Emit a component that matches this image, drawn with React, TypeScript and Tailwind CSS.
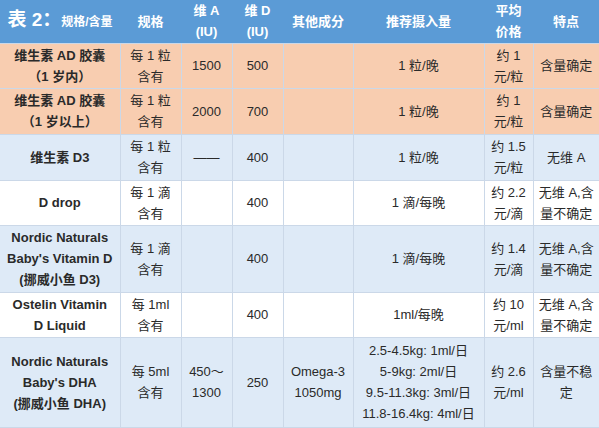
import React from "react";

type Row = {
  name: string[];
  spec: string[];
  va: string[];
  vd: string;
  other: string[];
  dose: string[];
  price: string[];
  note: string[];
  bg: string;
  h: string;
};

const rows: Row[] = [
  {
    name: ["维生素 AD 胶囊", "（1 岁内）"],
    spec: ["每 1 粒", "含有"],
    va: ["1500"],
    vd: "500",
    other: [],
    dose: ["1 粒/晚"],
    price: ["约 1", "元/粒"],
    note: ["含量确定"],
    bg: "bg-[#f8cdb0]",
    h: "h-[45px]",
  },
  {
    name: ["维生素 AD 胶囊", "（1 岁以上）"],
    spec: ["每 1 粒", "含有"],
    va: ["2000"],
    vd: "700",
    other: [],
    dose: ["1 粒/晚"],
    price: ["约 1", "元/粒"],
    note: ["含量确定"],
    bg: "bg-[#f8cdb0]",
    h: "h-[46px]",
  },
  {
    name: ["维生素 D3"],
    spec: ["每 1 粒", "含有"],
    va: ["——"],
    vd: "400",
    other: [],
    dose: ["1 粒/晚"],
    price: ["约 1.5", "元/粒"],
    note: ["无维 A"],
    bg: "bg-[#deeaf7]",
    h: "h-[46px]",
  },
  {
    name: ["D drop"],
    spec: ["每 1 滴", "含有"],
    va: [],
    vd: "400",
    other: [],
    dose: ["1 滴/每晚"],
    price: ["约 2.2", "元/滴"],
    note: ["无维 A,含", "量不确定"],
    bg: "bg-white",
    h: "h-[45px]",
  },
  {
    name: ["Nordic Naturals", "Baby's Vitamin D", "(挪威小鱼 D3)"],
    spec: ["每 1 滴", "含有"],
    va: [],
    vd: "400",
    other: [],
    dose: ["1 滴/每晚"],
    price: ["约 1.4", "元/滴"],
    note: ["无维 A,含", "量不确定"],
    bg: "bg-[#deeaf7]",
    h: "h-[67px]",
  },
  {
    name: ["Ostelin Vitamin", "D Liquid"],
    spec: ["每 1ml", "含有"],
    va: [],
    vd: "400",
    other: [],
    dose: ["1ml/每晚"],
    price: ["约 10", "元/ml"],
    note: ["无维 A,含", "量不确定"],
    bg: "bg-white",
    h: "h-[45px]",
  },
  {
    name: ["Nordic Naturals", "Baby's DHA", "(挪威小鱼 DHA)"],
    spec: ["每 5ml", "含有"],
    va: ["450～", "1300"],
    vd: "250",
    other: ["Omega-3", "1050mg"],
    dose: [
      "2.5-4.5kg: 1ml/日",
      "5-9kg: 2ml/日",
      "9.5-11.3kg: 3ml/日",
      "11.8-16.4kg: 4ml/日",
    ],
    price: ["约 2.6", "元/ml"],
    note: ["含量不稳", "定"],
    bg: "bg-[#deeaf7]",
    h: "h-[90px]",
  },
];

function Lines({ items }: { items: string[] }) {
  return (
    <>
      {items.map((t, i) => (
        <div key={i} className="whitespace-nowrap">
          {t}
        </div>
      ))}
    </>
  );
}

const td = "border border-[#cbd8e8] p-0 text-center align-middle";

export default function App() {
  return (
    <div
      className="w-[599px] h-[428px] overflow-hidden bg-white text-[13px] leading-[21px] text-[#2a2a2a]"
      style={{ fontFamily: '"Liberation Sans", "Noto Sans CJK SC", sans-serif' }}
    >
      <table className="w-[599px] table-fixed border-collapse">
        <colgroup>
          <col className="w-[120px]" />
          <col className="w-[61px]" />
          <col className="w-[51px]" />
          <col className="w-[51px]" />
          <col className="w-[70px]" />
          <col className="w-[131px]" />
          <col className="w-[49px]" />
          <col className="w-[66px]" />
        </colgroup>
        <thead>
          <tr className="h-[43px] bg-[#5b9bd6] font-bold text-white">
            <th className="p-0 text-center align-middle whitespace-nowrap">
              <span className="text-[19px]">表 2：</span>
              <span className="text-[12px]">规格/含量</span>
            </th>
            <th className="p-0 text-center align-middle">规格</th>
            <th className="p-0 text-center align-middle">
              <div>维 A</div>
              <div>(IU)</div>
            </th>
            <th className="p-0 text-center align-middle">
              <div>维 D</div>
              <div>(IU)</div>
            </th>
            <th className="p-0 text-center align-middle">其他成分</th>
            <th className="p-0 text-center align-middle">推荐摄入量</th>
            <th className="p-0 text-center align-middle">
              <div>平均</div>
              <div>价格</div>
            </th>
            <th className="p-0 text-center align-middle">特点</th>
          </tr>
        </thead>
        <tbody>
          {rows.map((r, i) => (
            <tr key={i} className={`${r.bg} ${r.h}`}>
              <td className={`${td} font-bold border-l-0`}>
                <Lines items={r.name} />
              </td>
              <td className={td}>
                <Lines items={r.spec} />
              </td>
              <td className={td}>
                <Lines items={r.va} />
              </td>
              <td className={td}>{r.vd}</td>
              <td className={td}>
                <Lines items={r.other} />
              </td>
              <td className={td}>
                <Lines items={r.dose} />
              </td>
              <td className={td}>
                <Lines items={r.price} />
              </td>
              <td className={`${td} border-r-0`}>
                <Lines items={r.note} />
              </td>
            </tr>
          ))}
        </tbody>
      </table>
    </div>
  );
}
